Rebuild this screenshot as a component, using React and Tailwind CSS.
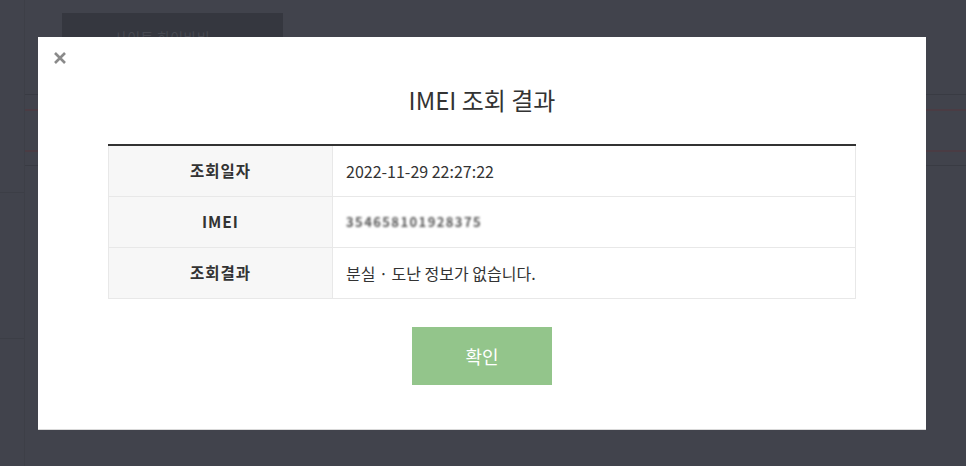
import React from 'react'

const font = { fontFamily: '"Noto Sans CJK KR", "Noto Sans", sans-serif' }

const rows = [
  { label: '조회일자', value: '2022-11-29 22:27:22' },
  { label: 'IMEI', value: '354658101928375', blur: true },
  { label: '조회결과', value: '분실 · 도난 정보가 없습니다.' },
]

export default function App() {
  return (
    <div className="relative w-[966px] h-[466px] overflow-hidden bg-[#41434c]" style={font}>
      {/* dimmed page behind the dialog */}
      <div className="flex h-full">
        <div className="w-[25px] shrink-0 border-r border-[#3d3f47] flex flex-col">
          <div className="h-[193px] border-b border-[#3c3e46]" />
          <div className="h-[146px] border-b border-[#3c3e46]" />
        </div>
        <div className="flex-1 flex flex-col pt-[13px]">
          <div className="ml-[37px] w-[221px] h-[40px] bg-[#35373f] flex justify-center pt-[14px]">
            <span className="text-[14px] text-[#474951] tracking-wide">사이트 하이바비 .ㅡ</span>
          </div>
          <div className="mt-[41px] border-t border-[#393b43]" />
          <div className="mt-[14px] border-t-2 border-[#4a3c44]" />
          <div className="mt-[39px] border-t-2 border-[#4a3c44]" />
          <div className="mt-[13px] border-t border-[#393b43]" />
        </div>
      </div>

      {/* dialog overlay */}
      <div className="absolute inset-0 pl-[38px] pt-[37px]">
        <div className="w-[888px] h-[393px] bg-white border-b border-[#d9d9d9] flex flex-col">
          <div className="pl-[15px] pt-[14px] h-[28px]">
            <button className="block w-[14px] h-[14px]">
              <svg viewBox="0 0 14 14" width="14" height="14">
                <path d="M2 2 L12 12 M12 2 L2 12" stroke="#8a8a8a" strokeWidth="2.6" />
              </svg>
            </button>
          </div>

          <h2 className="pt-[19px] text-center text-[24px] leading-[32px] text-[#333]">IMEI 조회 결과</h2>

          <div className="mx-[70px] mt-[28px] border-t-[2px] border-[#333]">
            {rows.map((r) => (
              <div key={r.label} className="flex h-[51px] border-b border-x border-[#e8e8e8]">
                <div className="w-[224px] shrink-0 bg-[#f7f7f7] border-r border-[#e8e8e8] flex items-center justify-center text-[15.5px] font-bold tracking-[1px] text-[#333]">
                  {r.label}
                </div>
                <div className="flex items-center pl-[13px] text-[16px] text-[#333]">
                  {r.blur ? (
                    <span className="blur-[1.2px] text-[13px] font-bold text-[#555] tracking-[1.4px]">{r.value}</span>
                  ) : (
                    r.value
                  )}
                </div>
              </div>
            ))}
          </div>

          <div className="flex justify-center mt-[28px]">
            <button className="w-[140px] h-[58px] bg-[#93c58b] text-white text-[18px]">확인</button>
          </div>
        </div>
      </div>
    </div>
  )
}
